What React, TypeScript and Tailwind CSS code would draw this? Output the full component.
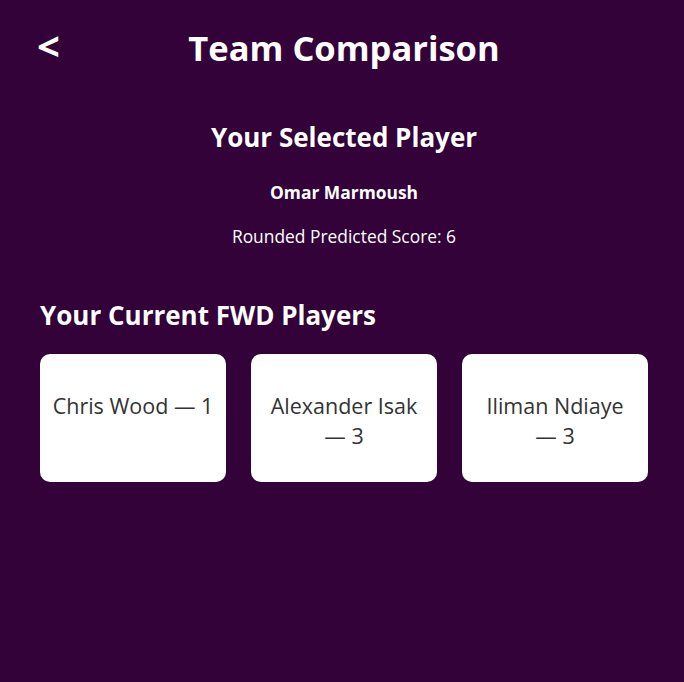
export default function App() {
  const players = [
    { name: 'Chris Wood', score: 1 },
    { name: 'Alexander Isak', score: 3 },
    { name: 'Iliman Ndiaye', score: 3 },
  ];

  return (
    <div
      className="min-h-screen bg-[#320238] text-white"
      style={{ fontFamily: '"Open Sans", "Noto Sans", sans-serif' }}
    >
      <div className="w-[608px] ml-[40px]">
        <header className="relative flex items-center justify-center pt-[24px] h-[72px]">
          <button className="absolute left-[-3px] top-[26px] text-[40px] font-bold leading-[40px]">&lt;</button>
          <h1 className="text-[34.5px] font-bold leading-[46px]">Team Comparison</h1>
        </header>

        <section className="mt-[48px] text-center">
          <h2 className="text-[26px] font-bold leading-[34px]">Your Selected Player</h2>
          <p className="mt-[26px] text-[17.4px] font-bold leading-[24px]">Omar Marmoush</p>
          <p className="mt-[20px] text-[17.4px] leading-[24px]">Rounded Predicted Score: 6</p>
        </section>

        <section className="mt-[50px]">
          <h2 className="text-[26px] font-bold leading-[34px]">Your Current FWD Players</h2>
          <div className="mt-[22px] flex gap-[25px]">
            {players.map((p) => (
              <div
                key={p.name}
                className="w-[186px] h-[128px] rounded-[10px] bg-white px-[10px] pt-[37px] text-center text-[21.5px] leading-[30px] text-[#333]"
              >
                {p.name} {'—\u00a0' + p.score}
              </div>
            ))}
          </div>
        </section>
      </div>
    </div>
  );
}
